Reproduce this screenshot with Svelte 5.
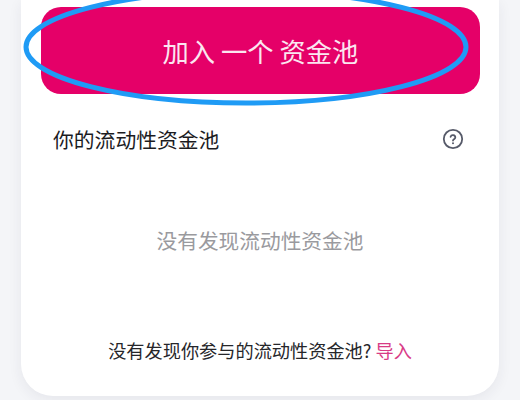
<script>
  const title = '你的流动性资金池'
  const empty = '没有发现流动性资金池'
</script>

<div class="page">
  <main class="card">
    <button class="join">加入 一个 资金池</button>

    <div class="head">
      <span>{title}</span>
      <span class="help">
        <svg width="22" height="22" viewBox="0 0 22 22" fill="none">
          <circle cx="11" cy="11" r="9.200" stroke="#565a69" stroke-width="1.800" />
          <path d="M8.6 8.8a2.4 2.4 0 0 1 4.7.7c0 1.500-2.300 1.900-2.300 3" stroke="#565a69" stroke-width="1.800" stroke-linecap="round" />
          <circle cx="11" cy="15.300" r="1" fill="#565a69" />
        </svg>
      </span>
    </div>

    <p class="empty">{empty}</p>

    <p class="foot">没有发现你参与的流动性资金池? <span class="link">导入</span></p>
  </main>

  <svg class="circle" width="520" height="120" viewBox="0 0 520 120" fill="none">
    <ellipse cx="246" cy="47" rx="220" ry="56" stroke="#1f9bf5" stroke-width="5" />
  </svg>
</div>

<style>
  :global(body) {
    margin: 0;
    background: #f4f5f8;
  }

  .page {
    position: relative;
    height: 400px;
    overflow: hidden;
    padding: 0 21px;
    font-family: "Noto Sans CJK SC", "Liberation Sans", sans-serif;
  }

  .card {
    box-sizing: border-box;
    height: 396px;
    padding: 7px 20px 0;
    background: #fff;
    border-radius: 0 0 32px 32px;
    box-shadow: 0 4px 14px rgba(40, 45, 70, 0.07);
    display: flex;
    flex-direction: column;
  }

  .join {
    height: 87px;
    width: 439px;
    flex: none;
    border: 0;
    border-radius: 20px;
    background: #e50068;
    color: #fbe6f0;
    font-family: inherit;
    font-size: 26.300px;
    font-weight: 400;
  }

  .head {
    display: flex;
    justify-content: space-between;
    align-items: center;
    margin: 30px 0 0 12px;
    height: 30px;
    color: #1c1c1f;
    font-size: 20.800px;
  }

  .help {
    display: flex;
    margin-right: 15.500px;
  }

  .empty {
    margin: 71px 0 0;
    text-align: center;
    color: #9a9a9e;
    font-size: 20.700px;
    line-height: 30px;
  }

  .foot {
    margin: 82px 0 0;
    text-align: center;
    color: #26262a;
    font-size: 18.200px;
    line-height: 26px;
  }

  .link {
    color: #d83b86;
  }

  .circle {
    position: absolute;
    left: 0;
    top: 0;
    pointer-events: none;
  }
</style>
